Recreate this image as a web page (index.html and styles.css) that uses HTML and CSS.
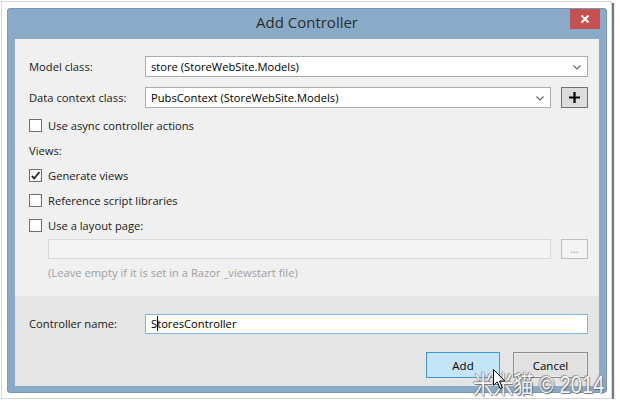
FILE: index.html
```html
<!DOCTYPE html>
<html lang="en">
<head>
    <meta charset="UTF-8">
    <title>Add Controller</title>
    <link rel="stylesheet" href="styles.css">
</head>
<body>
    <div class="frame">
        <div class="window">
            <div class="titlebar">
                <span></span>
                <div class="title">Add Controller</div>
                <div class="close">
                    <svg width="10" height="10" viewBox="0 0 10 10"><path d="M1.5 1.5 L8.5 8.5 M8.5 1.5 L1.5 8.5" stroke="#fff" stroke-width="2"/></svg>
                </div>
            </div>

            <div class="content">
                <div class="main">
                    <!-- Model / context -->
                    <div class="field">
                        <label class="label">Model class:</label>
                        <div class="combo">
                            <span>store (StoreWebSite.Models)</span>
                            <svg class="chev" width="8" height="5" viewBox="0 0 8 5"><path d="M0.5 0.5 L4 4 L7.5 0.5" fill="none" stroke="#666" stroke-width="1.2"/></svg>
                        </div>
                    </div>
                    <div class="field">
                        <label class="label">Data context class:</label>
                        <div class="combo">
                            <span>PubsContext (StoreWebSite.Models)</span>
                            <svg class="chev" width="8" height="5" viewBox="0 0 8 5"><path d="M0.5 0.5 L4 4 L7.5 0.5" fill="none" stroke="#666" stroke-width="1.2"/></svg>
                        </div>
                        <button class="small-btn plus">
                            <svg width="11" height="11" viewBox="0 0 11 11"><path d="M5.5 0 V11 M0 5.5 H11" stroke="#000" stroke-width="2.2"/></svg>
                        </button>
                    </div>

                    <div class="check-row first"><span class="box"></span>Use async controller actions</div>
                    <div class="line">Views:</div>
                    <div class="check-row">
                        <span class="box">
                            <svg width="11" height="11" viewBox="0 0 11 11"><path d="M1.8 5.8 L4.2 8.4 L9.4 2" fill="none" stroke="#222" stroke-width="1.7"/></svg>
                        </span>Generate views
                    </div>
                    <div class="check-row"><span class="box"></span>Reference script libraries</div>
                    <div class="check-row"><span class="box"></span>Use a layout page:</div>

                    <div class="layout-row">
                        <div class="text-box disabled"></div>
                        <button class="small-btn browse">...</button>
                    </div>
                    <div class="hint">(Leave empty if it is set in a Razor _viewstart file)</div>
                </div>

                <div class="footer">
                    <div class="field">
                        <label class="label">Controller name:</label>
                        <div class="text-box name">S<span class="caret"></span>toresController</div>
                    </div>
                    <div class="actions">
                        <button class="btn add">Add</button>
                        <button class="btn cancel">Cancel</button>
                    </div>
                </div>
            </div>
        </div>

        <div class="watermark">米米貓 © 2014</div>
        <svg class="cursor" width="13" height="21" viewBox="0 0 13 21"><path d="M0.5 0.5 V16.5 L4.3 12.8 L7 19.5 L9.3 18.6 L6.6 12 H11.8 Z" fill="#fff" stroke="#000" stroke-width="1"/></svg>
    </div>
</body>
</html>
```

FILE: styles.css
```css
body {
    margin: 0;
    background: #fff;
    font-family: "Open Sans", "Noto Sans", sans-serif;
    font-size: 11.2px;
    color: #1a1a1a;
}
.frame {
    position: relative;
    width: 600px;
    margin: 1px 0 0 1px;
    padding: 6px 4px 5px 5px;
    border: 1px solid #d4d4d4;
    box-shadow: 2px 2px 1px #7a7a7a;
}
.window {
    width: 600px;
    height: 385px;
    background: #8aabc8;
    border-radius: 4px;
    box-shadow: inset 0 0 0 1px #7898b5;
    display: flex;
    flex-direction: column;
}
.titlebar {
    height: 31px;
    display: grid;
    grid-template-columns: 1fr auto 1fr;
}
.title {
    font-size: 15px;
    color: #2b2b2b;
    line-height: 29px;
}
.close {
    justify-self: end;
    margin: 1px 7px 0 0;
    width: 30px;
    height: 20px;
    background: #c75050;
    display: flex;
    align-items: center;
    justify-content: center;
}
.content {
    margin: 0 8px 7px;
    flex: 1;
    display: flex;
    flex-direction: column;
}
.main {
    background: #f0f0f0;
    height: 257px;
    padding: 17px 11px 0 14px;
    box-sizing: border-box;
}
.footer {
    background: #e5e5e5;
    flex: 1;
    padding: 17px 11px 0 14px;
}
.field {
    display: flex;
    align-items: center;
    height: 21px;
    margin-bottom: 10px;
}
.label {
    width: 116px;
    flex: none;
}
.combo {
    flex: 1;
    height: 21px;
    box-sizing: border-box;
    border: 1px solid #acacac;
    background: #fff;
    display: flex;
    align-items: center;
    justify-content: space-between;
    padding: 0 6px 0 5px;
    color: #000;
}
.chev {
    margin-top: 1px;
}
.small-btn {
    width: 27px;
    height: 21px;
    margin-left: 10px;
    padding: 0;
    box-sizing: border-box;
    display: flex;
    align-items: center;
    justify-content: center;
    font-family: inherit;
}
.plus {
    background: #dcdcdc;
    border: 1px solid #707070;
}
.browse {
    height: 20px;
    background: #f4f4f4;
    border: 1px solid #bfbfbf;
    color: #8c8c8c;
    font-size: 10px;
    line-height: 1;
}
.check-row, .line {
    height: 25px;
    display: flex;
    align-items: center;
}
.check-row.first {
    margin-top: -5px;
}
.box {
    width: 13px;
    height: 13px;
    box-sizing: border-box;
    border: 1px solid #707070;
    background: #fff;
    margin-right: 6px;
    display: flex;
    align-items: center;
    justify-content: center;
}
.layout-row {
    display: flex;
    padding-left: 19px;
    height: 20px;
    margin-top: 1px;
}
.text-box {
    flex: 1;
    height: 20px;
    box-sizing: border-box;
    border: 1px solid #acacac;
    background: #fff;
}
.text-box.disabled {
    background: #f4f4f4;
    border-color: #d9d9d9;
}
.text-box.name {
    border-color: #7eb4ea;
    padding-left: 5px;
    line-height: 18px;
    color: #000;
}
.caret {
    display: inline-block;
    width: 1px;
    height: 15px;
    background: #000;
    vertical-align: middle;
    margin: -2px -1px 0 0;
}
.hint {
    margin-top: 4px;
    padding-left: 19px;
    height: 20px;
    line-height: 20px;
    color: #a0a0a0;
}
.actions {
    display: flex;
    justify-content: flex-end;
    gap: 13px;
    margin-top: 18px;
}
.btn {
    height: 26px;
    box-sizing: border-box;
    font-family: inherit;
    font-size: 11.5px;
    color: #000;
    padding: 0;
}
.add {
    width: 74px;
    background: #c4e4f8;
    border: 1px solid #3c9ad6;
}
.cancel {
    width: 75px;
    background: #e1e1e1;
    border: 1px solid #8c8c8c;
    box-shadow: inset 0 0 0 1px #ececec;
}
.watermark {
    position: absolute;
    left: 471px;
    top: 363px;
    font-family: "Liberation Sans", "Noto Sans CJK TC", sans-serif;
    font-size: 24px;
    color: #fff;
    white-space: nowrap;
    transform: scaleX(0.84);
    transform-origin: left top;
    text-shadow: 0 0 1px #555, 1px 1px 1px #666, -1px -1px 1px #999;
    opacity: 0.9;
}
.cursor {
    position: absolute;
    left: 491px;
    top: 367px;
}
```
